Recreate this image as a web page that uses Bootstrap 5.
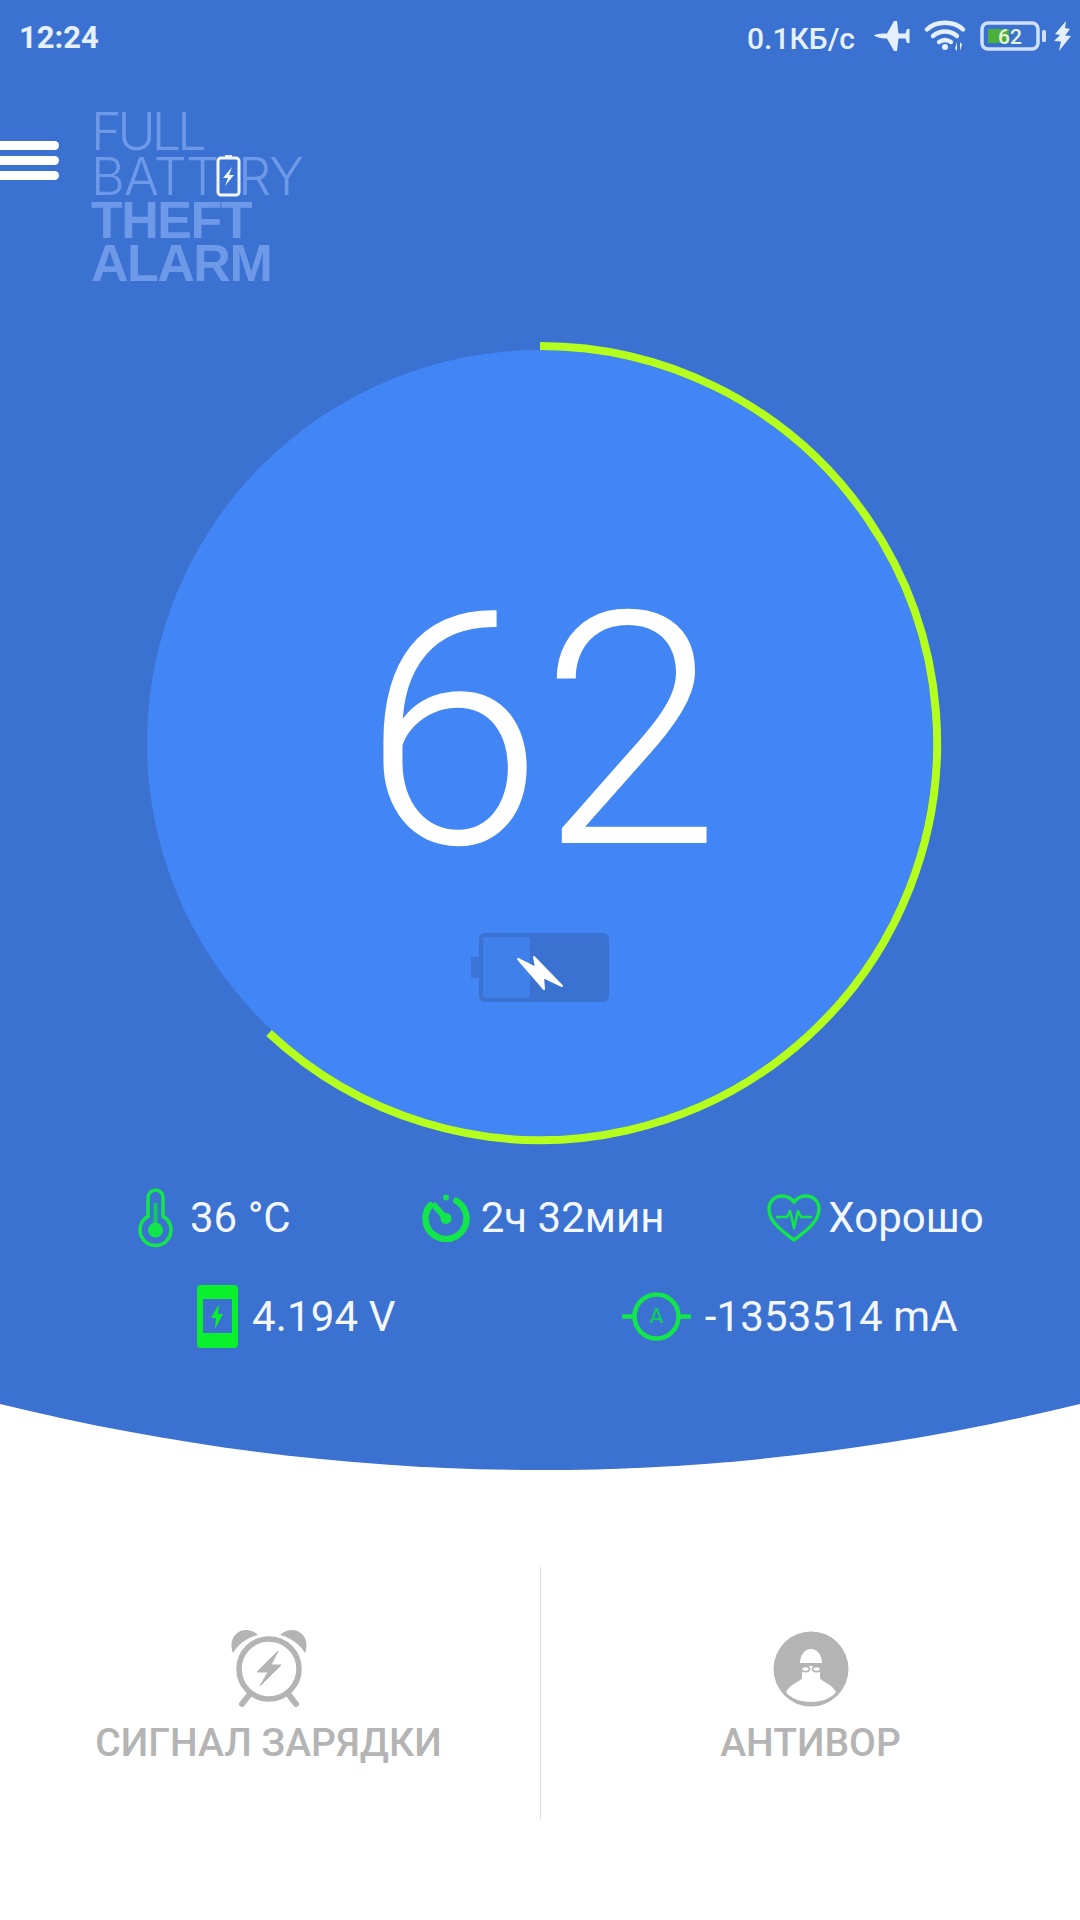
<!DOCTYPE html>
<html lang="ru">
<head>
<meta charset="utf-8">
<title>Full Battery Theft Alarm</title>
<link href="https://cdn.jsdelivr.net/npm/bootstrap@5.3.0/dist/css/bootstrap.min.css" rel="stylesheet">
<style>
html,body{margin:0;background:#fff;}
body{width:1080px;height:1920px;overflow:hidden;font-family:Roboto,"Liberation Sans",sans-serif;}
.app-top{background:#3b71d0;height:1404px;}
.app-curve{display:block;width:1080px;height:66px;}
.stat-bar{height:72px;padding:0 9px 0 19px;color:#e6f0fd;font-size:30px;font-weight:500;}
.stat-bar span{padding-top:4px;}
.clock{font-size:31px;font-weight:700;}
.net-speed{margin-right:19px;}
.st-plane{margin-right:14px;}
.st-wifi{margin-right:14px;}
.st-batt{margin-right:8px;}
.head-row{height:269px;padding-top:38px;}
.burger{width:59px;margin-top:31px;gap:6px;}
.burger i{display:block;height:9px;background:#fff;border-radius:0 5px 5px 0;}
.logo{margin-left:32px;color:#6d99e8;font-family:"Liberation Sans",sans-serif;font-size:52px;line-height:44px;letter-spacing:-2px;}
.logo-thin{font-family:Inter,sans-serif;font-weight:300;letter-spacing:-.8px;}
.logo-tight{letter-spacing:-4px;}
.logo-bold{font-weight:700;letter-spacing:-1.5px;margin-top:-1px;}
.logo-ic{width:25px;height:44px;vertical-align:-3px;margin:0 -3px 0 -2px;}
.gauge{width:804px;height:804px;margin:0 auto;}
.gauge-read{inset:0;padding-top:228px;}
.gauge-num{color:#fff;font-size:325px;font-weight:300;line-height:1;letter-spacing:-3px;}
.gauge-bat{margin-top:38px;}
.stats{color:#f2f7fe;font-size:42px;line-height:60px;margin-top:23px;}
.stat-row{height:99px;}
.r1{padding-left:138px;}
.r2{padding-left:197px;letter-spacing:.15px;}
.m-a{margin-left:17px;}
.m-b{margin-left:131px;}
.m-c{margin-left:11px;}
.m-d{margin-left:103px;}
.m-e{margin-left:7px;}
.m-f{margin-left:14px;}
.m-g{margin-left:226px;}
.m-h{margin-left:14px;}
.actions{height:253px;margin-top:97px;}
.act{width:540px;color:#b4b4b4;font-size:39px;font-weight:500;}
.act-left{padding-right:3px;}
.act+.act{border-left:1px solid #dfdfdf;}
.act svg{margin-top:63px;margin-bottom:6px;}
</style>
</head>
<body>
<div class="app-top">
  <div class="stat-bar d-flex align-items-center">
    <span class="clock me-auto">12:24</span>
    <span class="net-speed">0.1КБ/с</span>
    <svg class="st-plane" width="36" height="32" viewBox="0 0 36 32"><path fill="#e6f0fd" d="M0 15.500C2 14 6 13.500 13 13.500L20 1h3L24.500 13.500h7L33 9h2.500v14H33l-1.500-4.500h-7L23 31h-3L13 18.500C6 18.500 2 17 0 15.500z"/></svg>
    <svg class="st-wifi" width="42" height="32" viewBox="0 0 42 32"><g fill="none" stroke="#e6f0fd" stroke-width="4.400" stroke-linecap="round"><path d="M3 9.500C12 .5 30 .5 39 9.500"/><path d="M9 16c7-6 17-6 24 0"/><path d="M15 22c4-2.800 8-2.800 12 0"/></g><circle cx="21" cy="27" r="3" fill="#e6f0fd"/><path fill="#e6f0fd" d="M33 22v9l-2-2.500zM36 31v-9l2 2.500z"/></svg>
    <svg class="st-batt" width="66" height="30" viewBox="0 0 66 30"><rect x="2" y="2" width="56" height="26" rx="6" fill="none" stroke="#cfe0f8" stroke-width="3.500"/><rect x="8" y="8" width="21" height="14" fill="#4caf3a"/><rect x="62" y="9" width="4" height="12" rx="1.500" fill="#cfe0f8"/><text x="30" y="23" text-anchor="middle" font-family="Roboto,sans-serif" font-size="21" font-weight="500" fill="#e2f5d6">62</text></svg>
    <svg width="17" height="30" viewBox="0 0 17 30"><path fill="#e6f0fd" d="M12 0L1 13l5 1-6 6 7 .5L5 30l12-15-6-.5 5-6.500-5-1z"/></svg>
  </div>
  <div class="head-row d-flex align-items-start">
    <div class="burger d-flex flex-column"><i></i><i></i><i></i></div>
    <div class="logo">
      <div class="logo-thin logo-tight">FULL</div>
      <div class="logo-thin">BATT<svg class="logo-ic" viewBox="0 0 25 44"><rect x="9" y="1" width="7" height="4" fill="#dfe9fb"/><rect x="2" y="4" width="21" height="37" rx="3" fill="none" stroke="#f0f5fe" stroke-width="3"/><path fill="#f0f5fe" d="M16 13l-9 11h5l-3 8 9-11h-5z"/></svg>RY</div>
      <div class="logo-bold">THEFT</div>
      <div class="logo-bold">ALARM</div>
    </div>
  </div>
  <div class="gauge position-relative">
    <svg width="804" height="804" viewBox="0 0 804 804">
      <circle cx="402" cy="402" r="393" fill="#4285f4"/>
      <path d="M402 5A397 397 0 1 1 131 692" fill="none" stroke="#b4ff1e" stroke-width="8"/>
    </svg>
    <div class="gauge-read position-absolute d-flex flex-column align-items-center">
      <div class="gauge-num">62</div>
      <svg class="gauge-bat" width="139" height="70" viewBox="0 0 139 70">
        <rect x="0" y="25" width="9" height="21" rx="1" fill="#3b74d6"/>
        <rect x="8" y="1" width="130" height="69" rx="6" fill="#3b71d0"/>
        <rect x="12" y="5" width="47" height="61" rx="2" fill="#3f80ea"/>
        <path fill="#fff" stroke="#fff" stroke-width="2" stroke-linejoin="round" d="M47 27l18 9-2-11 28 29-19-9 1 12z"/>
      </svg>
    </div>
  </div>
  <div class="stats">
    <div class="stat-row r1 d-flex align-items-center">
      <svg width="35" height="60" viewBox="0 0 35 60"><path d="M10 28.400V9.500a7.500 7.500 0 0 1 15 0v18.900a15.500 15.500 0 1 1-15 0z" fill="none" stroke="#12e64a" stroke-width="3.500"/><path d="M15.500 15h4v25h-4z" fill="#12c860"/><circle cx="17.500" cy="42" r="7.500" fill="#12e64a"/></svg>
      <span class="m-a">36 °C</span>
      <svg class="m-b" width="48" height="48" viewBox="0 0 48 48"><path d="M34.200 6.750A20.500 20.500 0 1 1 8.300 11.300" fill="none" stroke="#12e64a" stroke-width="6.500" stroke-linecap="round"/><circle cx="24" cy="3.500" r="3" fill="#12e64a"/><path d="M11 10l13 14.500" stroke="#12e64a" stroke-width="6"/><circle cx="24" cy="24.500" r="5.500" fill="#12e64a"/></svg>
      <span class="m-c">2ч 32мин</span>
      <svg class="m-d" width="54" height="48" viewBox="0 0 54 48"><path d="M27 46C15 37 2 28 2 15 2 7 8 2 15 2c5 0 9 2 12 6 3-4 7-6 12-6 7 0 13 5 13 13 0 13-13 22-25 31z" fill="none" stroke="#12e64a" stroke-width="3.400"/><path d="M9 23h11l3-6 4 17 4-17 3 6h11" fill="none" stroke="#12e64a" stroke-width="2.600" stroke-linejoin="round"/></svg>
      <span class="m-e">Хорошо</span>
    </div>
    <div class="stat-row r2 d-flex align-items-center">
      <svg width="41" height="63" viewBox="0 0 41 63"><rect width="41" height="63" rx="4" fill="#0bf02c"/><rect x="6" y="14" width="29" height="34" fill="#3b71d0"/><path d="M22 19l-8 14h5l-1 11 8-15h-5z" fill="#0bf02c"/></svg>
      <span class="m-f">4.194 V</span>
      <svg class="m-g" width="69" height="51" viewBox="0 0 69 51"><circle cx="34.500" cy="25.500" r="22" fill="none" stroke="#12e64a" stroke-width="4.500"/><path d="M0 25.500h13M56 25.500h13" stroke="#12e64a" stroke-width="4.500"/><text x="34.500" y="32" text-anchor="middle" font-family="Roboto,sans-serif" font-size="21" font-weight="500" fill="#12c860">A</text></svg>
      <span class="m-h">-1353514 mA</span>
    </div>
  </div>
</div>
<svg class="app-curve" viewBox="0 0 1080 66" preserveAspectRatio="none"><path fill="#3b71d0" d="M0 0H1080C900 44 720 66 540 66S180 44 0 0z"/></svg>
<div class="actions d-flex">
  <div class="act act-left d-flex flex-column align-items-center">
    <svg width="78" height="78" viewBox="0 0 78 78"><g fill="#b4b4b4"><path d="M3 23C-2 10 6 0 16 0c5 0 9 2 12 5C16 8 8 15 3 23zM75 23C80 10 72 0 62 0c-5 0-9 2-12 5 12 3 20 10 25 18z"/><path stroke="#b4b4b4" stroke-linejoin="round" d="M48 21L27 42h11L30 56l21-21H41z"/></g><circle cx="39" cy="39" r="30" fill="none" stroke="#b4b4b4" stroke-width="5.500"/><path d="M19 65l-7 9M59 65l7 9" stroke="#b4b4b4" stroke-width="6" stroke-linecap="round"/></svg>
    <span>СИГНАЛ ЗАРЯДКИ</span>
  </div>
  <div class="act d-flex flex-column align-items-center">
    <svg width="78" height="78" viewBox="0 0 78 78"><circle cx="39" cy="39" r="37.500" fill="#b4b4b4"/><path fill="#fff" d="M28 33c0-8 5-14 11-14s11 6 11 14z"/><path fill="#fff" d="M30 36h18v12c2 4 12 6 16 14-4 6-14 10-25 10s-21-4-25-10c4-8 14-10 16-14z"/><path d="M25 34.500h28" stroke="#b4b4b4" stroke-width="2"/><g fill="#fff" stroke="#b4b4b4" stroke-width="1.600"><ellipse cx="33.500" cy="39" rx="4" ry="2.600"/><ellipse cx="44.500" cy="39" rx="4" ry="2.600"/></g></svg>
    <span>АНТИВОР</span>
  </div>
</div>
<script src="https://cdn.jsdelivr.net/npm/bootstrap@5.3.0/dist/js/bootstrap.bundle.min.js"></script>
</body>
</html>
